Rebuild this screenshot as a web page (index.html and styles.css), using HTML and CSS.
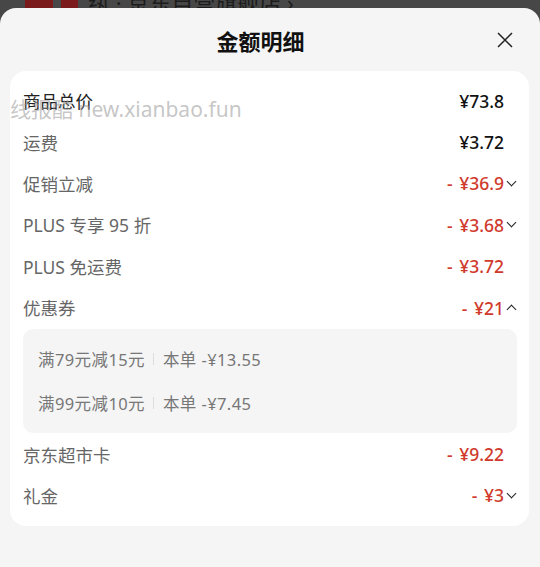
FILE: index.html
```html
<!DOCTYPE html>
<html lang="zh-CN">

<head>
    <meta charset="UTF-8">
    <meta name="viewport" content="width=device-width, initial-scale=1.0">
    <title>金额明细</title>
    <link rel="stylesheet" href="styles.css">
</head>

<body>
    <!-- page behind the sheet, dimmed -->
    <div class="backdrop">
        <div class="backdrop-row">
            <span class="tag tag-wide"></span>
            <span class="tag"></span>
            <span class="shop">纨 · 京东自营旗舰店 ›</span>
        </div>
    </div>

    <div class="sheet">
        <div class="sheet-head">
            <h1 class="sheet-title">金额明细</h1>
            <span class="close">
                <svg width="16" height="16" viewBox="0 0 16 16">
                    <path d="M1 1 L15 15 M15 1 L1 15" stroke="#222" stroke-width="1.5" fill="none" />
                </svg>
            </span>
        </div>

        <div class="card">
            <div class="row">
                <span class="label label-dark">商品总价</span>
                <span class="value">¥73.8</span>
            </div>
            <div class="row">
                <span class="label">运费</span>
                <span class="value">¥3.72</span>
            </div>
            <div class="row">
                <span class="label">促销立减</span>
                <span class="value value-red">- ¥36.9<i class="chev down"></i></span>
            </div>
            <div class="row">
                <span class="label">PLUS 专享 95 折</span>
                <span class="value value-red">- ¥3.68<i class="chev down"></i></span>
            </div>
            <div class="row">
                <span class="label">PLUS 免运费</span>
                <span class="value value-red">- ¥3.72</span>
            </div>
            <div class="row">
                <span class="label">优惠券</span>
                <span class="value value-red">- ¥21<i class="chev up"></i></span>
            </div>

            <div class="coupons">
                <div class="coupon">
                    <span>满79元减15元</span>
                    <span class="sep"></span>
                    <span>本单 -¥13.55</span>
                </div>
                <div class="coupon">
                    <span>满99元减10元</span>
                    <span class="sep"></span>
                    <span>本单 -¥7.45</span>
                </div>
            </div>

            <div class="row">
                <span class="label">京东超市卡</span>
                <span class="value value-red">- ¥9.22</span>
            </div>
            <div class="row">
                <span class="label">礼金</span>
                <span class="value value-red">- ¥3<i class="chev down"></i></span>
            </div>

            <!-- watermark -->
            <div class="watermark">线报酷 new.xianbao.fun</div>
        </div>
    </div>
</body>

</html>
```

FILE: styles.css
```css
body {
    margin: 0;
    background-color: #f5f5f5;
    font-family: "Noto Sans", "Noto Sans CJK SC", sans-serif;
    color: #222;
}

.backdrop {
    height: 24px;
    background-color: #474747;
    overflow: hidden;
    margin-bottom: -16px;
}

.backdrop-row {
    display: flex;
    align-items: center;
    gap: 8px;
    margin-top: -14px;
    padding-left: 25px;
    height: 30px;
}

.tag {
    width: 17px;
    height: 18px;
    background-color: #7a1a1a;
    border-radius: 2px;
}

.tag-wide {
    width: 28px;
}

.shop {
    font-size: 22px;
    color: #1c1c1c;
    margin-left: 2px;
}

.sheet {
    position: relative;
    background-color: #f5f5f5;
    border-radius: 16px 16px 0 0;
    padding: 0 11px 40px 10px;
}

.sheet-head {
    position: relative;
    height: 63px;
    display: flex;
    align-items: center;
    justify-content: center;
}

.sheet-title {
    margin: 0 18px 0 0;
    font-size: 22px;
    font-weight: bold;
    color: #111;
    padding-top: 1px;
}

.close {
    position: absolute;
    right: 16px;
    top: 24px;
    display: flex;
}

.card {
    position: relative;
    background-color: #fff;
    border-radius: 16px;
    padding: 9px 12px 10px 13px;
}

.row {
    height: 41.4px;
    display: flex;
    align-items: center;
    justify-content: space-between;
}

.label {
    font-size: 17.5px;
    color: #666;
}

.label-dark {
    color: #222;
}

.value {
    display: flex;
    align-items: center;
    font-family: "Noto Sans", sans-serif;
    font-size: 17.5px;
    font-weight: 500;
    color: #111;
    padding-right: 13px;
}

.value-red {
    color: #d03a2c;
    word-spacing: 2px;
}

.value-red:has(.chev) {
    padding-right: 0;
}

.chev {
    width: 6px;
    height: 6px;
    border-right: 1.5px solid #222;
    border-bottom: 1.5px solid #222;
    margin-left: 4px;
    margin-right: 2px;
}

.chev.down {
    transform: rotate(45deg);
    margin-top: -4px;
}

.chev.up {
    transform: rotate(-135deg);
    margin-top: 4px;
}

.coupons {
    background-color: #f5f5f5;
    border-radius: 10px;
    padding: 8px 15px;
    margin: 1px 0 0;
}

.coupon {
    height: 44px;
    display: flex;
    align-items: center;
    font-size: 16.5px;
    letter-spacing: 0.4px;
    color: #777;
}

.sep {
    width: 1px;
    height: 12px;
    background-color: #ddd;
    margin: 0 9px 0 8px;
}

.watermark {
    position: absolute;
    left: 0;
    top: 22px;
    font-size: 21px;
    color: rgba(150, 150, 150, 0.55);
    white-space: nowrap;
}
```
